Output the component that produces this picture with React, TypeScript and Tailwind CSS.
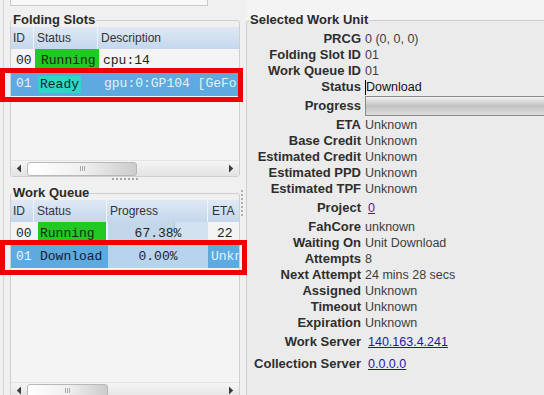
import React from "react";

const LeftArrow = () => (
  <svg width="6" height="9" viewBox="0 0 6 9"><path d="M5 0.5 L0.8 4.5 L5 8.5 Z" fill="#3a3a3a" /></svg>
);
const RightArrow = () => (
  <svg width="6" height="9" viewBox="0 0 6 9"><path d="M1 0.5 L5.2 4.5 L1 8.5 Z" fill="#3a3a3a" /></svg>
);

function ScrollBar({ thumb }: { thumb: string }) {
  return (
    <div className="h-[16px] shrink-0 flex items-center bg-linear-to-b from-[#f5f5f5] to-[#e3e3e3] border-t border-[#e4e4e4]">
      <div className="w-[16px] flex justify-center"><LeftArrow /></div>
      <div className={`${thumb} h-[14px] rounded-[3px] border border-[#b8b8b8] bg-linear-to-r from-white via-[#f0f0f0] to-[#cccccc] flex items-center justify-center gap-[1px]`}>
        <div className="w-px h-[5px] bg-[#a8a8a8]" />
        <div className="w-px h-[5px] bg-[#a8a8a8]" />
        <div className="w-px h-[5px] bg-[#a8a8a8]" />
      </div>
      <div className="flex-1" />
      <div className="w-[16px] flex justify-center"><RightArrow /></div>
    </div>
  );
}

const mono = "font-['Liberation_Mono',monospace] text-[13px]";

function Legend({ children, ml }: { children: React.ReactNode; ml: string }) {
  return (
    <legend className={`${ml} px-[1px] text-[13px] leading-[14px] font-bold text-[#2b2b2b]`}>{children}</legend>
  );
}

type Row = { label: string; h: string; value: React.ReactNode };

export default function App() {
  const progress = 67.38;
  const rows: Row[] = [
    { label: "PRCG", h: "h-[16px]", value: <span className="pl-[4px]">0 (0, 0, 0)</span> },
    { label: "Folding Slot ID", h: "h-[16px]", value: <span className="pl-[4px]">01</span> },
    { label: "Work Queue ID", h: "h-[16px]", value: <span className="pl-[4px]">01</span> },
    {
      label: "Status",
      h: "h-[16px]",
      value: (
        <span className="pl-[4px] flex items-center text-[#111]">
          <span className="w-px h-[15px] bg-black" />
          <span>Download</span>
        </span>
      ),
    },
    {
      label: "Progress",
      h: "h-[22px]",
      value: (
        <div className="pl-[4px] flex-1 flex">
          <div className="flex-1 h-[20px] border border-[#8a8a8a] border-r-0 bg-linear-to-b from-[#f2f2f2] via-[#c2c2c2] to-[#dedede]" />
        </div>
      ),
    },
    { label: "ETA", h: "h-[16px]", value: <span className="pl-[4px]">Unknown</span> },
    { label: "Base Credit", h: "h-[16px]", value: <span className="pl-[4px]">Unknown</span> },
    { label: "Estimated Credit", h: "h-[16px]", value: <span className="pl-[4px]">Unknown</span> },
    { label: "Estimated PPD", h: "h-[16px]", value: <span className="pl-[4px]">Unknown</span> },
    { label: "Estimated TPF", h: "h-[16px]", value: <span className="pl-[4px]">Unknown</span> },
    { label: "Project", h: "h-[22px]", value: <span className="pl-[7px] text-[#551a8b] underline">0</span> },
    { label: "FahCore", h: "h-[16px]", value: <span className="pl-[4px]">unknown</span> },
    { label: "Waiting On", h: "h-[16px]", value: <span className="pl-[4px]">Unit Download</span> },
    { label: "Attempts", h: "h-[16px]", value: <span className="pl-[4px]">8</span> },
    { label: "Next Attempt", h: "h-[16px]", value: <span className="pl-[4px]">24 mins 28 secs</span> },
    { label: "Assigned", h: "h-[16px]", value: <span className="pl-[4px]">Unknown</span> },
    { label: "Timeout", h: "h-[16px]", value: <span className="pl-[4px]">Unknown</span> },
    { label: "Expiration", h: "h-[16px]", value: <span className="pl-[4px]">Unknown</span> },
    { label: "Work Server", h: "h-[22px]", value: <span className="pl-[7px] text-[#1a1aa8] underline">140.163.4.241</span> },
    { label: "Collection Server", h: "h-[22px]", value: <span className="pl-[7px] text-[#1a1aa8] underline">0.0.0.0</span> },
  ];

  return (
    <div className="relative w-[544px] h-[395px] overflow-hidden flex bg-[#f0f0f0] text-[#333] font-['Liberation_Sans',Arial,sans-serif]">
      {/* Left panel */}
      <div className="w-[240px] shrink-0 h-full pl-[3px]">
        <div className="h-full border-l border-[#d6d6d6] pl-[6px] flex flex-col">
          <div className="w-[198px] h-[6px] shrink-0 border-x border-b border-[#cacaca] bg-[#f8f8f8]" />

          {/* Folding Slots */}
          <fieldset className="mt-[7px] min-w-0 shrink-0 border border-[#cfcfcf] rounded-[3px]">
            <Legend ml="ml-[1px]">Folding Slots</Legend>
            <div className="h-[149px] flex flex-col bg-[#f4f4f4] overflow-hidden">
              <div className="h-[22px] shrink-0 flex bg-linear-to-b from-[#dfe9f5] to-[#c4d7ec] text-[12px] text-[#333]">
                <div className="w-[23px] border-r border-[#eef4fa] pl-[2px] flex items-center">ID</div>
                <div className="w-[64px] border-r border-[#eef4fa] pl-[3px] flex items-center">Status</div>
                <div className="flex-1 pl-[3px] flex items-center">Description</div>
              </div>
              <div className={`h-[23px] shrink-0 flex ${mono} text-[#222]`}>
                <div className="w-[23px] pl-[5px] flex items-center">00</div>
                <div className="w-[64px] pl-[6px] ml-px flex items-center bg-[#22c922] text-[#0b2e0b]">Running</div>
                <div className="flex-1 pl-[4px] flex items-center">cpu:14</div>
              </div>
              <div className={`h-[24px] shrink-0 flex bg-[#5caae0] ${mono}`}>
                <div className="w-[23px] pl-[5px] flex items-center text-[#eaf4ff]">01</div>
                <div className="w-[64px] pl-[4px] flex items-center">
                  <span className="px-[2px] h-[17px] leading-[17px] bg-[#2fd6c6] text-[#0d2a28]">Ready</span>
                </div>
                <div className="flex-1 min-w-0 pl-[6px] flex items-center overflow-hidden whitespace-nowrap text-[#e6f0fa]">gpu:0:GP104 [GeForce GTX 1080]</div>
              </div>
              <div className="flex-1" />
              <ScrollBar thumb="w-[110px]" />
            </div>
          </fieldset>

          <div className="h-[9px] shrink-0 flex justify-center">
            <div className="mt-[1px] w-[26px] h-[2px] border-t-2 border-dotted border-[#a8a8a8]" />
          </div>

          {/* Work Queue */}
          <fieldset className="min-w-0 shrink-0 border border-[#cfcfcf] rounded-[3px]">
            <Legend ml="ml-[1px]">Work Queue</Legend>
            <div className="h-[198px] flex flex-col bg-[#f4f4f4] overflow-hidden">
              <div className="h-[22px] shrink-0 flex bg-linear-to-b from-[#dfe9f5] to-[#c4d7ec] text-[12px] text-[#333]">
                <div className="w-[23px] border-r border-[#eef4fa] pl-[2px] flex items-center">ID</div>
                <div className="w-[73px] border-r border-[#eef4fa] pl-[3px] flex items-center">Status</div>
                <div className="w-[101px] border-r border-[#eef4fa] pl-[3px] flex items-center">Progress</div>
                <div className="flex-1 pl-[4px] flex items-center">ETA</div>
              </div>
              <div className={`h-[23px] shrink-0 flex ${mono} text-[#222]`}>
                <div className="w-[23px] pl-[5px] flex items-center">00</div>
                <div className="w-[73px] pl-[4px] flex">
                  <div className="flex-1 mr-px pl-[2px] flex items-center bg-[#22c922] text-[#0b2e0b]">Running</div>
                </div>
                <div className="w-[101px] pl-px flex">
                  <div className="relative flex-1 bg-[#d3e2f1]">
                    <div className="absolute left-0 top-0 h-full bg-[#c3d6ea] border-r border-[#b4c9df]" style={{ width: `${progress}%` }} />
                    <div className="relative h-full flex items-center justify-center">67.38%</div>
                  </div>
                </div>
                <div className="flex-1 pl-[9px] flex items-center">22</div>
              </div>
              <div className={`h-[23px] shrink-0 flex bg-[#5caae0] ${mono}`}>
                <div className="w-[23px] pl-[5px] flex items-center text-[#eaf4ff]">01</div>
                <div className="w-[73px] pl-[6px] flex items-center text-[#0f1c33]">Download</div>
                <div className="w-[101px] pl-px flex">
                  <div className="flex-1 bg-[#b7d3ed] flex items-center justify-center text-[#222]">0.00%</div>
                </div>
                <div className="flex-1 pl-[3px] flex items-center overflow-hidden whitespace-nowrap text-[#e6f0fa]">Unknown</div>
              </div>
              <div className="flex-1" />
              <ScrollBar thumb="w-[81px]" />
            </div>
          </fieldset>
        </div>
      </div>

      {/* Splitter */}
      <div className="w-[6px] shrink-0 h-full">
        <div className="mt-[190px] ml-[1px] w-[2px] h-[26px] border-l-2 border-dotted border-[#b0b0b0]" />
      </div>

      {/* Right panel */}
      <div className="flex-1 h-full bg-[#f4f4f4] overflow-hidden">
        <fieldset className="mt-[13px] w-[320px] min-w-0 h-[420px] border border-[#cfcfcf] rounded-[3px] bg-[#ebebeb]">
          <Legend ml="ml-[2px]">Selected Work Unit</Legend>
          <div className="pt-[4px] flex flex-col">
            {rows.map((r) => (
              <div key={r.label} className={`${r.h} flex items-center`}>
                <div className="w-[114px] shrink-0 text-right font-bold text-[13px] text-[#2e2e2e] whitespace-nowrap">{r.label}</div>
                <div className="flex-1 flex items-center text-[12.5px] text-[#3e3e3e] whitespace-nowrap">{r.value}</div>
              </div>
            ))}
          </div>
        </fieldset>
      </div>

      {/* Red annotation boxes */}
      <div className="absolute left-0 top-[68px] w-[243px] h-[34px] border-[5px] border-[#f00000] pointer-events-none" />
      <div className="absolute left-0 top-[240px] w-[247px] h-[35px] border-[5px] border-[#f00000] pointer-events-none" />
    </div>
  );
}
